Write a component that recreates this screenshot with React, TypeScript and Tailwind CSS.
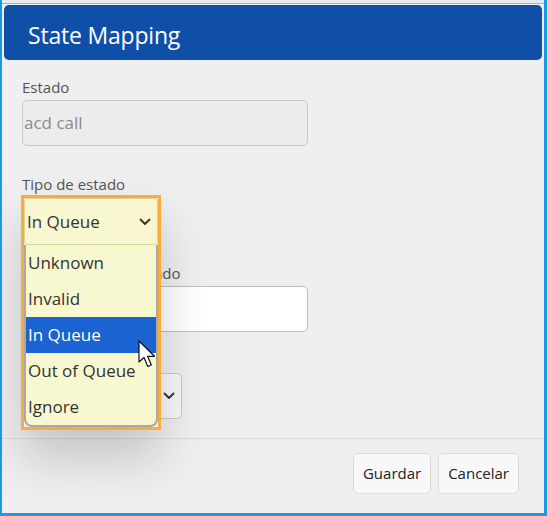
import React from 'react';

const options = ['Unknown', 'Invalid', 'In Queue', 'Out of Queue', 'Ignore'];

const Chevron = ({ className = '' }: { className?: string }) => (
  <svg viewBox="0 0 12 8" width="12" height="8" className={className}>
    <path d="M1.5 1.5 L6 6 L10.5 1.5" fill="none" stroke="#333" strokeWidth="1.8" strokeLinecap="round" strokeLinejoin="round" />
  </svg>
);

const Cursor = () => (
  <svg width="22" height="30" viewBox="0 0 22 30" className="absolute left-[114px] top-[142px]">
    <path
      d="M1 1 L1 22 L6 17.5 L9.8 26.5 L13.3 25 L9.6 16.3 L16.5 16.3 Z"
      fill="#fff"
      stroke="#111"
      strokeWidth="1.2"
      strokeLinejoin="round"
    />
  </svg>
);

const Field = ({ label, className = '', children }: { label: string; className?: string; children: React.ReactNode }) => (
  <div className={`flex flex-col ${className}`}>
    <label className="h-[20px] leading-[20px] text-[15px] text-[#555]">{label}</label>
    <div className="mt-[3px]">{children}</div>
  </div>
);

export default function App() {
  return (
    <div
      className="w-[547px] h-[516px] flex flex-col bg-[#efefef] border-l-2 border-r-[3px] border-b-[3px] border-[#1b9ae0] overflow-hidden"
      style={{ fontFamily: '"Open Sans", "Noto Sans", sans-serif' }}
    >
      <div className="h-[4px] bg-[#e4eaef] border-b border-[#8fb8dc]" />
      <div className="mx-[2px] mt-[1px] h-[55px] rounded-[5px] bg-[#0f4fa8] px-6 pt-[5px] flex items-center">
        <h1 className="text-[23px] text-white tracking-[-0.2px]">State Mapping</h1>
      </div>

      <div className="relative flex-1 flex flex-col">
        <div className="px-[20px] flex flex-col">
          <Field label="Estado" className="mt-[17px]">
            <div className="w-[286px] h-[46px] rounded-[5px] border border-[#c9c9c9] bg-[#ececec] px-[1px] flex items-center text-[17px] text-[#8a8a8a]">
              acd call
            </div>
          </Field>
          <Field label="Tipo de estado" className="mt-[28px]">
            <div className="w-[136px] h-[46px] rounded-[5px] border border-[#c9c9c9] bg-white" />
          </Field>
          <Field label="Descripción del estado" className="mt-[20px]">
            <div className="w-[286px] h-[46px] rounded-[5px] border border-[#bdbdbd] bg-white" />
          </Field>
          <Field label="" className="mt-[18px]">
            <div className="w-[160px] h-[46px] rounded-[5px] border border-[#c9c9c9] bg-[#f8f8f8] flex items-center justify-end pr-[6px]">
              <Chevron />
            </div>
          </Field>
        </div>

        <div className="mt-[19px] border-t border-[#d9d9d9] flex justify-end gap-[7px] pt-[14px] pr-[25px]">
          <button className="h-[41px] px-[9px] rounded-[5px] border border-[#dcdcdc] bg-[#f8f8f8] text-[15px] text-[#222]">
            Guardar
          </button>
          <button className="h-[41px] px-[9px] rounded-[5px] border border-[#dcdcdc] bg-[#f8f8f8] text-[15px] text-[#222]">
            Cancelar
          </button>
        </div>

        {/* open select with focus ring */}
        <div className="absolute left-[19px] top-[135px] w-[140px] border-[3px] border-[#f7ac3c] shadow-[0_28px_50px_rgba(0,0,0,0.18)]">
          <div className="h-[47px] rounded-[4px] border border-[#d9d39a] bg-[#f8f7cf] flex items-center justify-between pl-[2px] pr-[6px] text-[17px] text-[#333]">
            <span>In Queue</span>
            <Chevron />
          </div>
          <ul className="rounded-b-[8px] border-x-2 border-b-2 border-[#a9a9a9] bg-[#f8f8d0] overflow-hidden">
            {options.map(o => (
              <li
                key={o}
                className={`h-[36px] flex items-center pl-[2px] text-[17px] ${
                  o === 'In Queue' ? 'bg-[#1a63d0] text-white' : 'text-[#333]'
                }`}
              >
                {o}
              </li>
            ))}
          </ul>
          <Cursor />
        </div>
      </div>
    </div>
  );
}
